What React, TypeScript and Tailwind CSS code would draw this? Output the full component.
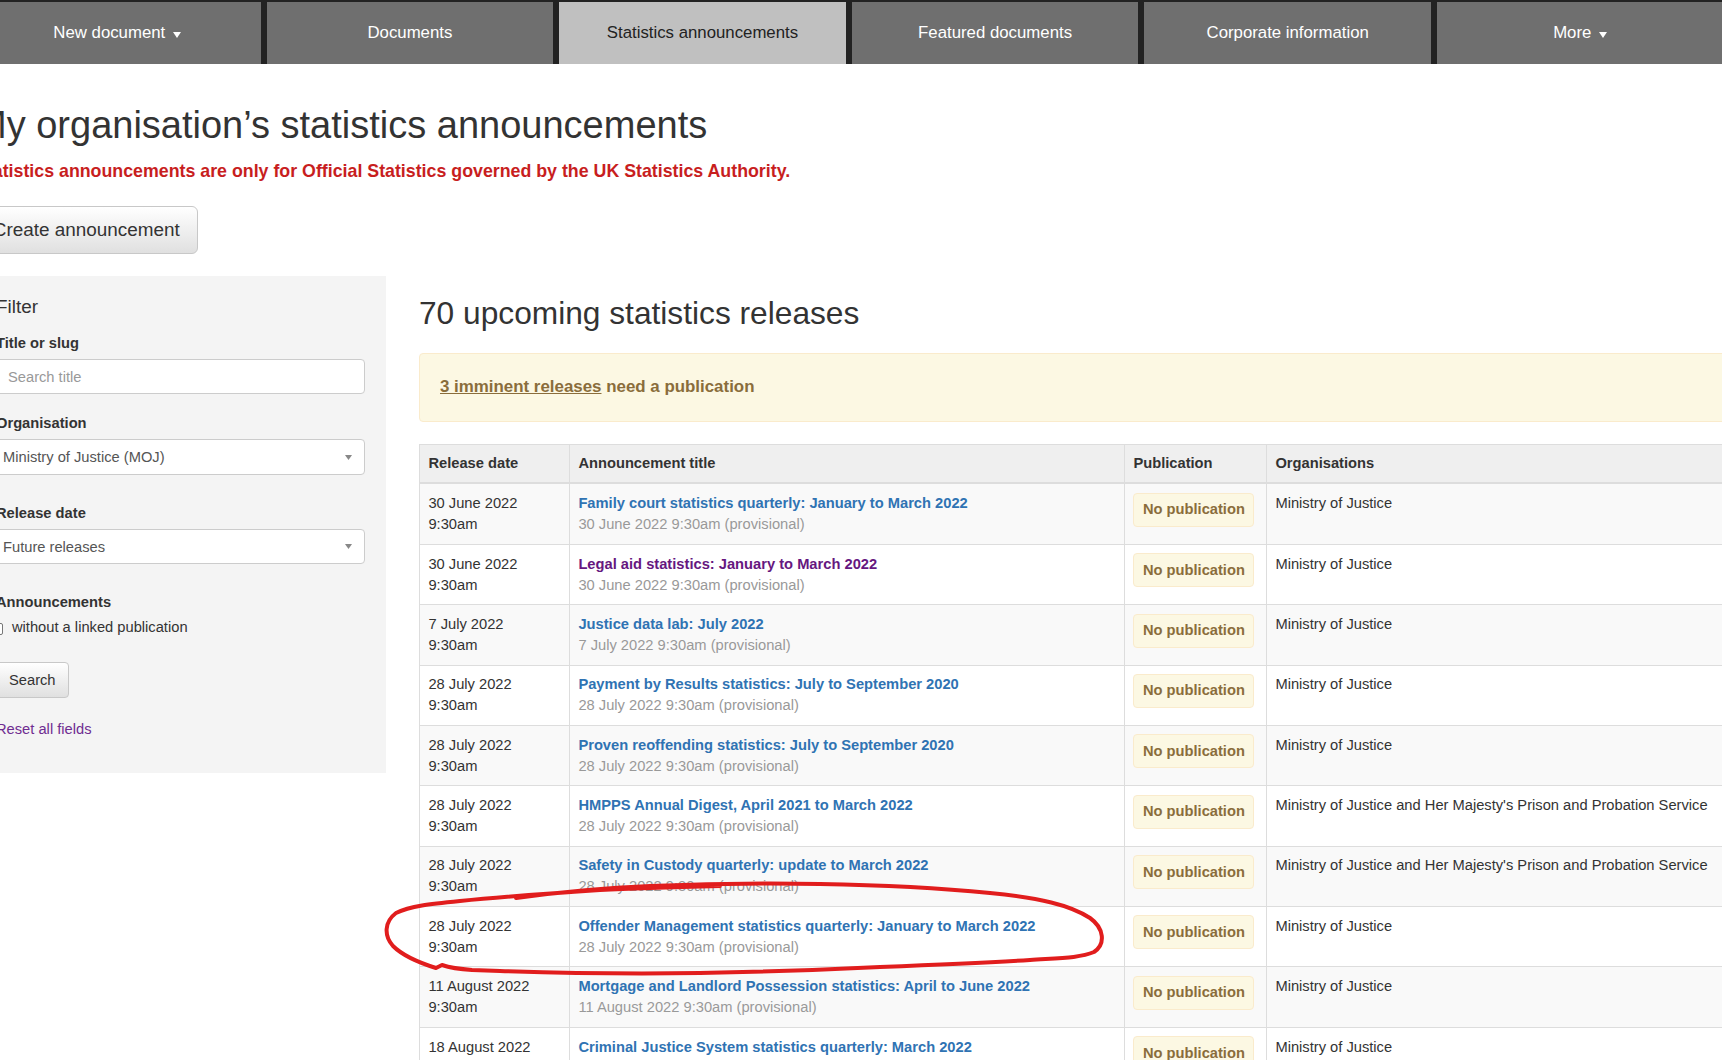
import React from "react";

type Row = {
  date: string;
  title: string;
  sub: string;
  org: string;
  visited?: boolean;
};

const rows: Row[] = [
  { date: "30 June 2022", title: "Family court statistics quarterly: January to March 2022", sub: "30 June 2022 9:30am (provisional)", org: "Ministry of Justice" },
  { date: "30 June 2022", title: "Legal aid statistics: January to March 2022", sub: "30 June 2022 9:30am (provisional)", org: "Ministry of Justice", visited: true },
  { date: "7 July 2022", title: "Justice data lab: July 2022", sub: "7 July 2022 9:30am (provisional)", org: "Ministry of Justice" },
  { date: "28 July 2022", title: "Payment by Results statistics: July to September 2020", sub: "28 July 2022 9:30am (provisional)", org: "Ministry of Justice" },
  { date: "28 July 2022", title: "Proven reoffending statistics: July to September 2020", sub: "28 July 2022 9:30am (provisional)", org: "Ministry of Justice" },
  { date: "28 July 2022", title: "HMPPS Annual Digest, April 2021 to March 2022", sub: "28 July 2022 9:30am (provisional)", org: "Ministry of Justice and Her Majesty's Prison and Probation Service" },
  { date: "28 July 2022", title: "Safety in Custody quarterly: update to March 2022", sub: "28 July 2022 9:30am (provisional)", org: "Ministry of Justice and Her Majesty's Prison and Probation Service" },
  { date: "28 July 2022", title: "Offender Management statistics quarterly: January to March 2022", sub: "28 July 2022 9:30am (provisional)", org: "Ministry of Justice" },
  { date: "11 August 2022", title: "Mortgage and Landlord Possession statistics: April to June 2022", sub: "11 August 2022 9:30am (provisional)", org: "Ministry of Justice" },
  { date: "18 August 2022", title: "Criminal Justice System statistics quarterly: March 2022", sub: "18 August 2022 9:30am (provisional)", org: "Ministry of Justice" },
];

function Caret({ color = "#fff" }: { color?: string }) {
  return (
    <svg width="8" height="6" viewBox="0 0 8 6" className="ml-[8px] mt-[3px]">
      <path d="M0 0 L8 0 L4 6 Z" fill={color} />
    </svg>
  );
}

function SelectArrow() {
  return (
    <svg width="7" height="5" viewBox="0 0 7 5">
      <path d="M0 0 L7 0 L3.5 5 Z" fill="#888" />
    </svg>
  );
}

const tabs = [
  { label: "New document", caret: true },
  { label: "Documents" },
  { label: "Statistics announcements", active: true },
  { label: "Featured documents" },
  { label: "Corporate information" },
  { label: "More", caret: true },
];

export default function App() {
  return (
    <div className="relative w-[1722px] h-[1060px] overflow-hidden bg-white text-[#333] font-['Liberation_Sans',Arial,sans-serif]">
      {/* Top navigation */}
      <nav className="ml-[-26px] w-[1770px] bg-[#222] pt-[2px] flex gap-[6px]">
        {tabs.map((t) => (
          <div
            key={t.label}
            className={
              t.active
                ? "w-[286.6px] shrink-0 h-[62px] flex items-center justify-center bg-[#c0c0c0] text-[#222] text-[16.8px]"
                : "w-[286.6px] shrink-0 h-[62px] flex items-center justify-center bg-[#6f6f6f] text-white text-[16.8px]"
            }
          >
            <span>{t.label}</span>
            {t.caret ? <Caret /> : null}
          </div>
        ))}
      </nav>

      <div className="ml-[-25px]">
        <h1 className="mt-[41px] text-[38px] leading-[1.1] font-normal">My organisation’s statistics announcements</h1>
        <p className="mt-[12px] text-[17.8px] leading-[25px] font-bold text-[#c81e1e]">
          Statistics announcements are only for Official Statistics governed by the UK Statistics Authority.
        </p>
        <button className="mt-[22px] h-[48px] px-[16.8px] text-[18.9px] text-[#333] border border-[#c8c8c8] rounded-[6px] bg-gradient-to-b from-white to-[#e0e0e0]">
          Create announcement
        </button>

        <div className="flex mt-[22px] items-start">
          {/* Filter panel */}
          <aside className="w-[411px] shrink-0 bg-[#f4f4f4] px-[21px] pt-[20px] pb-[33px] text-[14.7px]">
            <h3 className="text-[18.9px] leading-[21px] font-normal">Filter</h3>
            <div className="mt-[16px] font-bold leading-[21px]">Title or slug</div>
            <div className="mt-[5px] h-[35.5px] bg-white border border-[#ccc] rounded-[4px] flex items-center px-[11px] text-[#999]">
              Search title
            </div>
            <div className="mt-[19px] font-bold leading-[21px]">Organisation</div>
            <div className="mt-[5px] h-[35.5px] bg-white border border-[#ccc] rounded-[4px] flex items-center justify-between pl-[6px] pr-[12px] text-[#555]">
              <span>Ministry of Justice (MOJ)</span>
              <SelectArrow />
            </div>
            <div className="mt-[28px] font-bold leading-[21px]">Release date</div>
            <div className="mt-[5px] h-[35.5px] bg-white border border-[#ccc] rounded-[4px] flex items-center justify-between pl-[6px] pr-[12px] text-[#555]">
              <span>Future releases</span>
              <SelectArrow />
            </div>
            <div className="mt-[28px] font-bold leading-[21px]">Announcements</div>
            <label className="mt-[4px] flex items-center leading-[21px] ml-[-5px]">
              <span className="w-[12px] h-[12px] border border-[#777] rounded-[2px] bg-white mt-[3px]" />
              <span className="ml-[9px]">without a linked publication</span>
            </label>
            <button className="mt-[24px] h-[36px] px-[12px] text-[14.7px] text-[#333] border border-[#c8c8c8] rounded-[4px] bg-gradient-to-b from-white to-[#e0e0e0]">
              Search
            </button>
            <div className="mt-[21px] leading-[21px] text-[#6f2c91]">Reset all fields</div>
          </aside>

          {/* Main column */}
          <main className="ml-[33px] shrink-0">
            <h2 className="mt-[20px] text-[31.7px] leading-[1.1] font-normal">70 upcoming statistics releases</h2>
            <div className="mt-[22px] w-[1340px] bg-[#fcf8e3] border border-[#faebcc] rounded-[4px] px-[20px] py-[21.5px] text-[16.9px] leading-[24px] font-bold text-[#8a6d3b]">
              <span className="underline">3 imminent releases</span> need a publication
            </div>

            <table className="mt-[22px] w-[1340px] border-collapse text-[14.7px] leading-[21px]">
              <colgroup>
                <col className="w-[150px]" />
                <col className="w-[555px]" />
                <col className="w-[142px]" />
                <col />
              </colgroup>
              <thead>
                <tr className="bg-[#efefef] border-b-2 border-[#ddd]">
                  <th className="text-left font-bold px-[8.4px] py-[8.4px] border border-[#ddd] border-b-2">Release date</th>
                  <th className="text-left font-bold px-[8.4px] py-[8.4px] border border-[#ddd] border-b-2">Announcement title</th>
                  <th className="text-left font-bold px-[8.4px] py-[8.4px] border border-[#ddd] border-b-2">Publication</th>
                  <th className="text-left font-bold px-[8.4px] py-[8.4px] border border-[#ddd] border-b-2">Organisations</th>
                </tr>
              </thead>
              <tbody>
                {rows.map((r, i) => (
                  <tr key={i} className={i % 2 === 0 ? "bg-[#f9f9f9]" : "bg-white"}>
                    <td className="align-top px-[8.4px] py-[8.7px] border border-[#ddd]">
                      <div>{r.date}</div>
                      <div>9:30am</div>
                    </td>
                    <td className="align-top px-[8.4px] py-[8.7px] border border-[#ddd]">
                      <div className={r.visited ? "font-bold text-[#66177f]" : "font-bold text-[#2f73b3]"}>{r.title}</div>
                      <div className="text-[#999]">{r.sub}</div>
                    </td>
                    <td className="align-top px-[8.4px] py-[8.4px] border border-[#ddd]">
                      <span className="inline-block px-[8.5px] py-[5.5px] bg-[#fcf8e3] border border-[#faebcc] rounded-[4px] font-bold text-[#8a6d3b] whitespace-nowrap">
                        No publication
                      </span>
                    </td>
                    <td className="align-top px-[8.4px] py-[8.7px] border border-[#ddd] whitespace-nowrap">{r.org}</td>
                  </tr>
                ))}
              </tbody>
            </table>
          </main>
        </div>
      </div>

      {/* Hand-drawn red annotation */}
      <svg
        className="absolute left-0 top-0 pointer-events-none"
        width="1722"
        height="1060"
        viewBox="0 0 1722 1060"
      >
        <path
          d="M516 898 C 560 892, 600 888, 650 886 C 700 884, 760 883, 820 884 C 880 885, 930 887, 990 893 C 1040 898, 1070 905, 1090 918 C 1104 928, 1106 944, 1094 952 C 1080 958, 1060 958, 1030 960 C 980 963, 930 965, 880 967 C 820 970, 760 972, 700 973 C 640 974, 560 973, 500 971 L 472 970 C 458 969, 448 967, 442 965 L 436 968 C 420 963, 402 955, 393 946 C 384 936, 384 922, 396 913 C 410 906, 430 904, 460 901 C 500 897, 540 894, 600 890 C 640 888, 680 887, 720 886"
          fill="none"
          stroke="#e11d1d"
          strokeWidth="4"
          strokeLinecap="round"
          strokeLinejoin="round"
        />
      </svg>
    </div>
  );
}
